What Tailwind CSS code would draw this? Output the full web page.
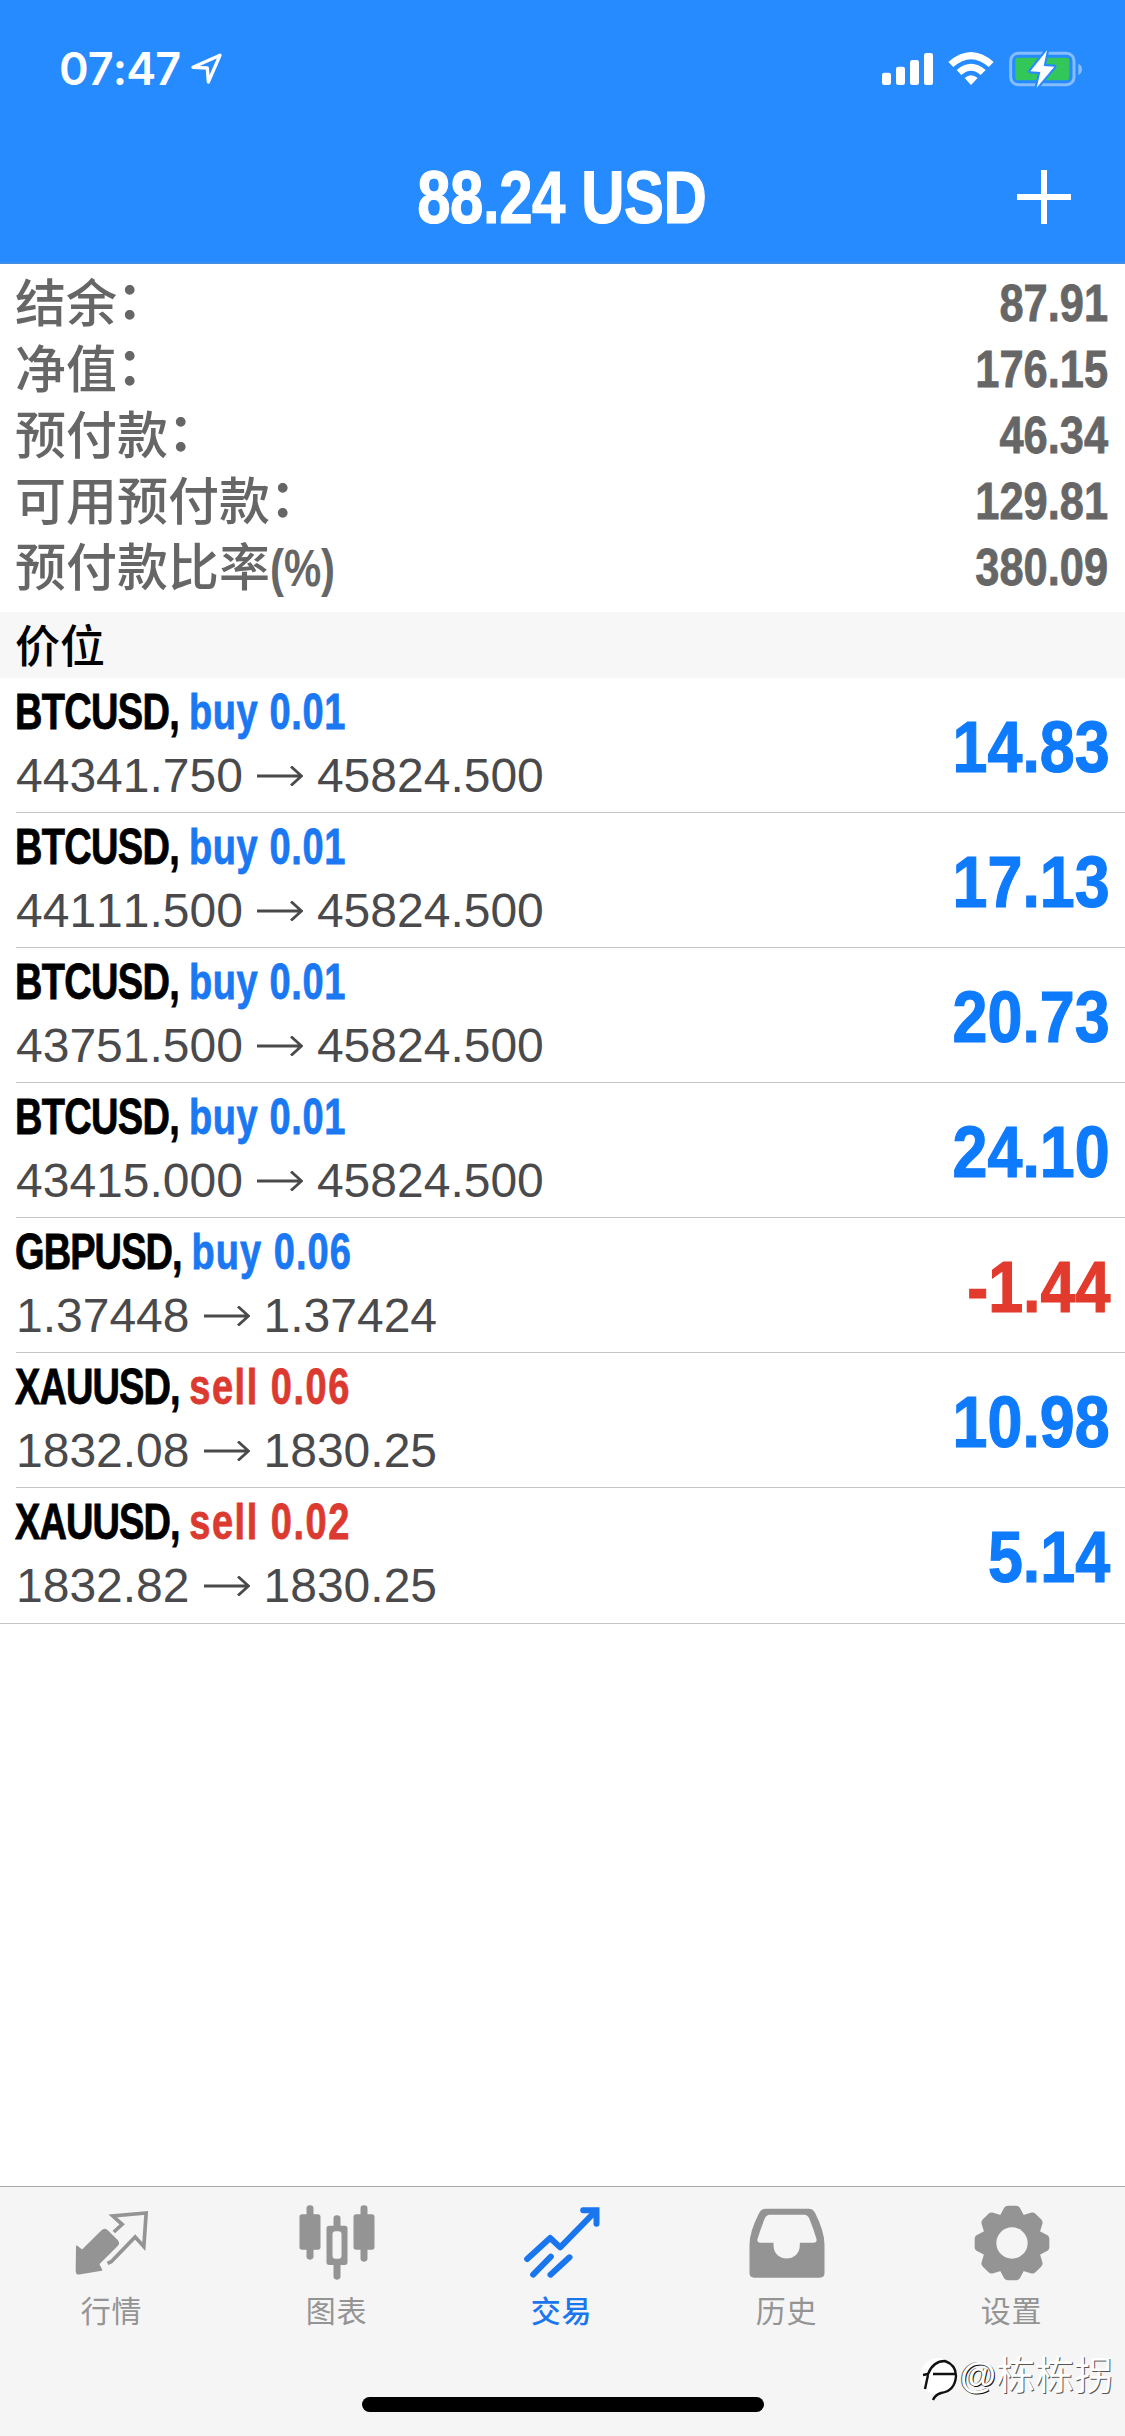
<!DOCTYPE html>
<html lang="zh-CN">
<head>
<meta charset="utf-8">
<title>交易</title>
<script src="https://cdn.jsdelivr.net/npm/@tailwindcss/browser@4"></script>
</head>
<body class="bg-white">
<div class="relative flex h-[2436px] w-[1125px] flex-col overflow-hidden bg-white font-['Liberation_Sans','Noto_Sans_CJK_SC',sans-serif] [font-kerning:none]">

  <header class="flex h-[264px] shrink-0 flex-col border-b-2 border-[#3f8fe8] bg-[#258bff] text-white">
    <div class="flex h-[132px] items-start justify-between pt-[44px] pr-[42px] pl-[59px]">
      <div class="flex items-start">
        <span class="w-[131px] text-[45px] leading-[50px] font-semibold tracking-[-0.9px] whitespace-nowrap font-['Inter',sans-serif]">07:47</span>
        <svg class="mt-[8px] h-[34px] w-[34px]" viewBox="570 156 102 102" fill="none" stroke="#fff" stroke-width="10" stroke-linejoin="round"><path d="M579 202 L660 166 L625 246 L622 204 Z"/></svg>
      </div>
      <svg class="h-[46px] w-[206px]" viewBox="51 42 618 138">
        <g fill="#fff">
          <rect x="66" y="128" width="27" height="37" rx="7"/>
          <rect x="108" y="110" width="27" height="55" rx="7"/>
          <rect x="150" y="90" width="27" height="75" rx="7"/>
          <rect x="192" y="69" width="27" height="96" rx="7"/>
          <path d="M265 96 Q333 36 401 96 L386 111 Q333 64 280 111 Z"/>
          <path d="M290 120 Q333 82 377 120 L362 135 Q333 109 304 135 Z"/>
          <path d="M314 144 Q333 128 353 144 L333 165 Z"/>
        </g>
        <rect x="452" y="70" width="190" height="94" rx="22" fill="none" stroke="#85bdff" stroke-width="9"/>
        <path d="M655 101 Q666 106 666 118 Q666 130 655 135 Z" fill="#85bdff"/>
        <rect x="466" y="83" width="162" height="68" rx="9" fill="#33c75a"/>
        <path d="M561 61 L511 124 L541 126 L530 173 L583 110 L551 108 Z" fill="#fff" stroke="#258bff" stroke-width="13" stroke-linejoin="round" paint-order="stroke"/>
      </svg>
    </div>
    <div class="grid h-[130px] grid-cols-[1fr_600px_1fr] items-center">
      <span></span>
      <h1 class="scale-x-[0.8] pr-[3px] text-center text-[75px] leading-[130px] font-bold tracking-[-0.6px] whitespace-nowrap [-webkit-text-stroke:1.2px_#fff]">88.24 USD</h1>
      <div class="flex justify-end pr-[54px]">
        <svg class="h-[54px] w-[54px]" viewBox="0 0 54 54" stroke="#fff" stroke-width="6"><path d="M27 0V54M0 27H54"/></svg>
      </div>
    </div>
  </header>

  <dl id="summary" class="flex h-[348px] shrink-0 flex-col pt-[6px] pr-[17px] pl-[15px] text-[#666]"></dl>

  <h2 class="h-[66px] shrink-0 bg-[#f7f7f7] pl-[15px] font-['Noto_Sans_CJK_SC',sans-serif] text-[45px] leading-[63px] font-medium text-black">价位</h2>

  <main id="positions" class="flex grow flex-col"></main>

  <nav class="flex h-[250px] shrink-0 flex-col items-center border-t border-[#a8a8a8] bg-[#f5f5f5]">
    <div class="grid h-[210px] w-full grid-cols-5 pt-[16px] font-['Noto_Sans_CJK_SC',sans-serif] text-[30px] leading-[36px] tracking-[0.8px] text-[#949494]">
      <a class="flex flex-col items-center gap-[8px]">
        <svg class="h-[80px] w-[80px]" viewBox="217.5 100 240 240">
          <path d="M229 230 L245 243 L304 184 Q313 176 321 184 L349 212 Q357 220 349 228 L294 283 L303 301 L236 312 Q228 313 228 305 Z" fill="#949494" stroke="#949494" stroke-width="5" stroke-linejoin="round"/>
          <path d="M340 187 L365 164 L337 139 L437 130 L430 231 L404 202 L332 276 L321 281" fill="none" stroke="#949494" stroke-width="11"/>
        </svg>
        <span class="pr-[2px]">行情</span>
      </a>
      <a class="flex flex-col items-center gap-[8px]">
        <svg class="h-[80px] w-[80px]" viewBox="892.5 100 240 240" fill="#949494">
          <rect x="918" y="107" width="21" height="163" rx="10"/><rect x="897" y="134" width="63" height="106" rx="8"/>
          <rect x="1080" y="107" width="21" height="169" rx="10"/><rect x="1059" y="134" width="63" height="106" rx="8"/>
          <rect x="999" y="137" width="21" height="193" rx="10"/><rect x="978" y="168" width="63" height="118" rx="8"/>
          <rect x="996" y="185" width="27" height="82" rx="9" fill="#f5f5f5"/>
        </svg>
        <span class="pr-[2px]">图表</span>
      </a>
      <a class="flex flex-col items-center gap-[8px] text-[#1a76ee]">
        <svg class="h-[80px] w-[80px]" viewBox="217.5 100 240 240" fill="none" stroke="#1a76ee" stroke-width="18" stroke-linecap="round" stroke-linejoin="round">
          <path d="M230 268 L299 205 L329 233 L434 126"/><path d="M398 122 H438 V162" stroke-linejoin="miter"/>
          <path d="M248 315 L301 261M300 315 L357 263"/>
        </svg>
        <span class="pr-[2px] font-medium">交易</span>
      </a>
      <a class="flex flex-col items-center gap-[8px]">
        <svg class="h-[80px] w-[80px]" viewBox="892.5 100 240 240" fill="#949494" fill-rule="evenodd">
          <path d="M946 117 H1074 Q1088 117 1094 130 Q1122 186 1122 225 V310 Q1122 324 1108 324 H911 Q897 324 897 310 V225 Q897 186 926 130 Q932 117 946 117 Z M958 135 Q948 135 943 146 Q930 178 921 208 Q919 219 930 219 H969 V226 C969 280 1048 280 1048 226 V219 H1089 Q1100 219 1098 208 Q1089 178 1076 146 Q1071 135 1061 135 Z"/>
        </svg>
        <span class="pr-[2px]">历史</span>
      </a>
      <a class="flex flex-col items-center gap-[8px]">
        <svg class="h-[80px] w-[80px]" viewBox="367.5 100 240 240">
          <g fill="#949494" stroke="#949494" stroke-width="6" stroke-linejoin="round">
            <circle cx="484.500" cy="220" r="84"/>
            <path id="t" d="M448 145 L464 115 Q467 111 472 111 H497 Q502 111 505 115 L521 145 Z"/>
            <use href="#t" transform="rotate(45 484.500 220)"/><use href="#t" transform="rotate(90 484.500 220)"/><use href="#t" transform="rotate(135 484.500 220)"/><use href="#t" transform="rotate(180 484.500 220)"/><use href="#t" transform="rotate(225 484.500 220)"/><use href="#t" transform="rotate(270 484.500 220)"/><use href="#t" transform="rotate(315 484.500 220)"/>
          </g>
          <circle cx="484.500" cy="220" r="47" fill="#f5f5f5"/>
        </svg>
        <span class="pr-[2px]">设置</span>
      </a>
    </div>
    <div class="h-[15px] w-[402px] rounded-full bg-black"></div>
  </nav>

  <div class="absolute top-[2348px] left-[918px] flex items-center">
    <svg class="h-[52px] w-[42px]" viewBox="0 0 42 52">
      <circle cx="20" cy="25" r="18" fill="#fff"/>
      <path d="M5 24 L10 23 Q15 10 27 10 Q38 14 38 25 Q37 40 23 42 Q17 44 15 49 M10 24 L7 38 M15 23 H37" fill="none" stroke="#111" stroke-width="2.4"/>
    </svg>
    <span class="pb-[3px] text-[37px] leading-[48px] font-bold text-white [text-shadow:1px_1px_0_#111,-1px_0_0_#555]">@</span>
    <span class="pb-[10px] font-['Noto_Sans_CJK_SC',sans-serif] text-[39px] leading-[48px] whitespace-nowrap text-white [text-shadow:1px_1px_0_#555]">栋栋拐</span>
  </div>
</div>

<script>
const summary = [['结余','：','87.91'],['净值','：','176.15'],['预付款','：','46.34'],['可用预付款','：','129.81'],['预付款比率','(%)','380.09']];
document.getElementById('summary').innerHTML = summary.map(([k, tail, v]) => `
  <div class="flex h-[66px] justify-between">
    <dt class="flex h-[66px] pt-[2px] text-[51px] leading-[66px] font-medium whitespace-nowrap"><span>${k}</span><span class="origin-left font-bold ${tail === '：' ? '-translate-y-[3px]' : 'scale-x-[0.82]'}">${tail}</span></dt>
    <dd class="origin-right scale-x-[0.835] text-[52px] leading-[66px] font-bold [-webkit-text-stroke:0.8px_#666]">${v}</dd>
  </div>`).join('');

const blue = 'text-[#1a78f2]', red = 'text-[#dc3a30]';
const positions = [
  ['BTCUSD','buy 0.01','44341.750','45824.500','14.83'],
  ['BTCUSD','buy 0.01','44111.500','45824.500','17.13'],
  ['BTCUSD','buy 0.01','43751.500','45824.500','20.73'],
  ['BTCUSD','buy 0.01','43415.000','45824.500','24.10'],
  ['GBPUSD','buy 0.06','1.37448','1.37424','-1.44'],
  ['XAUUSD','sell 0.06','1832.08','1830.25','10.98'],
  ['XAUUSD','sell 0.02','1832.82','1830.25','5.14'],
];
document.getElementById('positions').innerHTML = positions.map(([s, side, from, to, p], i) => `
  <section class="${i === 6 ? 'h-[136px] border-b border-[#c4c4c6]' : 'h-[135px] pl-[16px]'} shrink-0">
    <div class="flex h-full justify-between pr-[15px] ${i === 6 ? 'pl-[16px]' : 'border-b border-[#c4c4c6]'}">
      <div class="flex flex-col gap-[4px] pt-[4px]">
        <div class="-ml-px origin-left scale-x-[0.76] text-[50px] leading-[60px] font-bold whitespace-nowrap [-webkit-text-stroke:0.8px_currentColor]"><span class="${s[0] === 'B' ? 'tracking-[-0.9px]' : 'tracking-[-1.2px]'} text-black">${s}, </span><span class="${side[0] === 'b' ? (s[0] === 'G' ? 'tracking-[1.4px] ' : 'tracking-[0.8px] ') + blue : 'tracking-[2px] ' + red}">${side}</span></div>
        <div class="flex items-center text-[48px] leading-[60px] text-[#4a4a4c]">
          <span>${from}</span>
          <svg class="mx-[14px] h-[20px] w-[46px]" viewBox="0 0 46 20" fill="none" stroke="#4a4a4c" stroke-width="2.8"><path d="M0 10H44M34 0.500L44.500 10L34 19.500"/></svg>
          <span>${to}</span>
        </div>
      </div>
      <div class="origin-right scale-x-[0.86] pt-[1px] text-[73px] leading-[135px] font-bold whitespace-nowrap ${p[0] === '-' ? 'text-[#e23a2c]' : 'text-[#0e7afc]'} [-webkit-text-stroke:1.2px_currentColor]">${p}</div>
    </div>
  </section>`).join('');
</script>
</body>
</html>
